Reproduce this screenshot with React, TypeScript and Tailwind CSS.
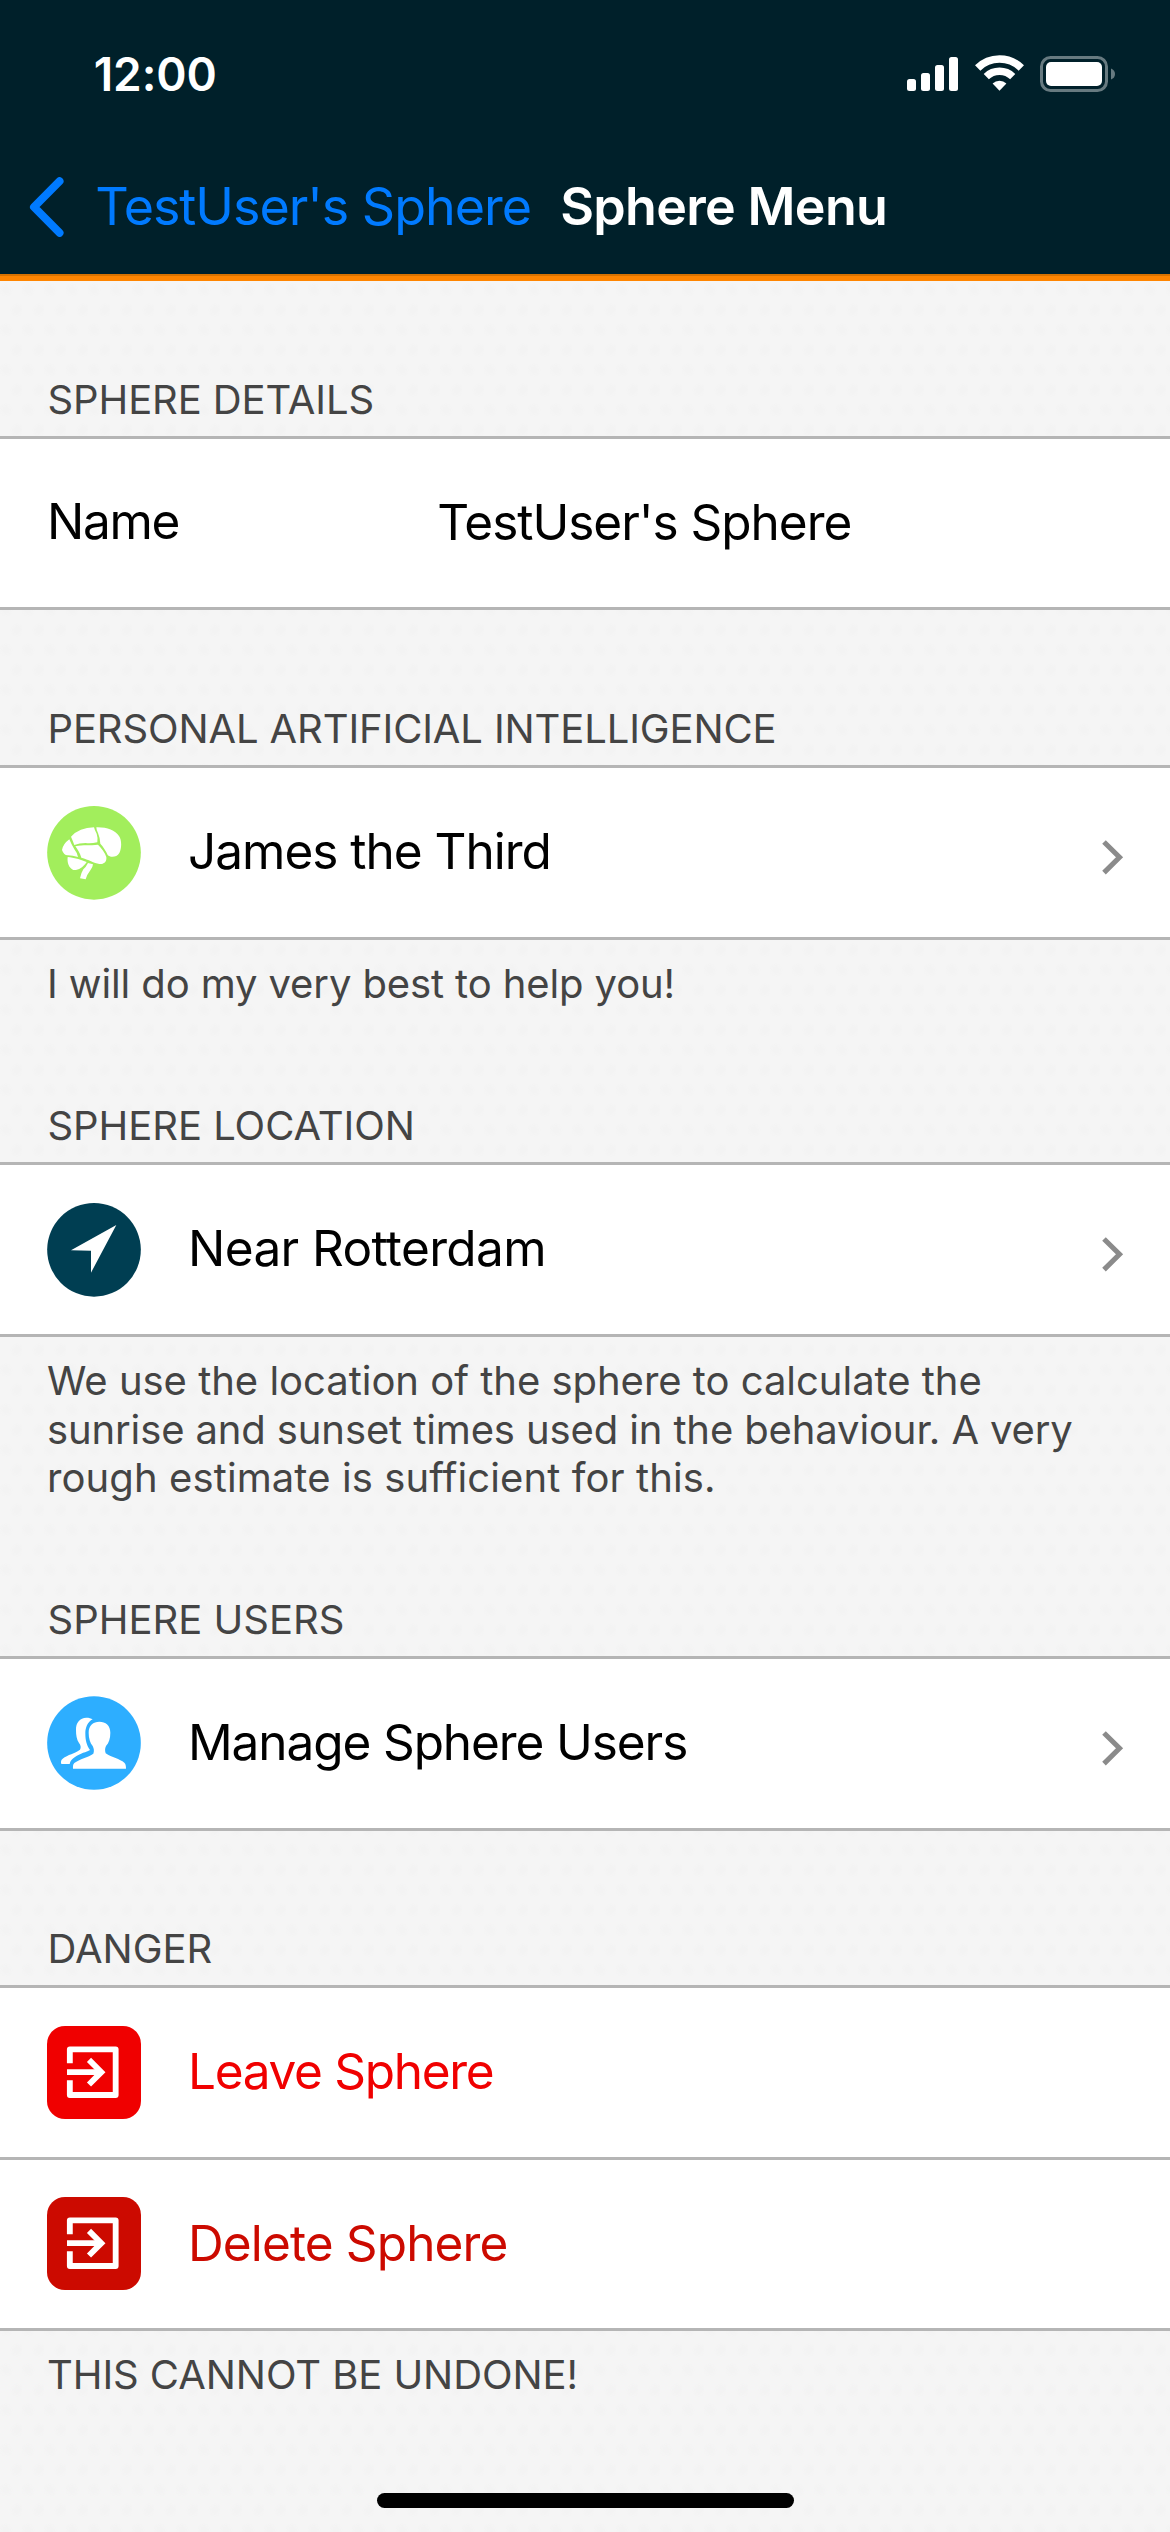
import type { ReactNode } from "react";

function StatusBar() {
  return (
    <div className="flex h-[148px] items-center pr-[55px] pl-[93.7px] text-white">
      <span className="text-[46px] leading-none font-semibold tracking-[-0.08px]">12:00</span>
      <svg className="ml-auto" width="51" height="34" viewBox="0 0 51 34" fill="currentColor">
        <rect x="0" y="22" width="9" height="12" rx="2.5" />
        <rect x="14" y="16" width="9" height="18" rx="2.5" />
        <rect x="28" y="8" width="9" height="26" rx="2.5" />
        <rect x="42" y="0" width="9" height="34" rx="2.5" />
      </svg>
      <svg className="mb-[2px] ml-[17px]" width="49" height="36" viewBox="0 0 49 36" fill="none">
        <path d="M2.7 13A31 31 0 0 1 46.3 13" stroke="currentColor" strokeWidth="7.6" />
        <path d="M11.3 21.6A19 19 0 0 1 37.7 21.6" stroke="currentColor" strokeWidth="7.4" />
        <path d="M17.6 28.6A10 10 0 0 1 31.4 28.6L24.5 35.8Z" fill="currentColor" />
      </svg>
      <svg className="ml-[16px]" width="75" height="36" viewBox="0 0 75 36">
        <rect x="1.5" y="1.5" width="65" height="33" rx="9" fill="none" stroke="#677a80" strokeWidth="3" />
        <rect x="6" y="6" width="56" height="24" rx="5" fill="currentColor" />
        <path d="M71 12.5Q75 14 75 18Q75 22 71 23.5Z" fill="#677a80" />
      </svg>
    </div>
  );
}

function NavBar() {
  return (
    <div className="flex h-[126px] items-center pb-[9px] pl-[27.5px] text-[52px] leading-[60px] whitespace-nowrap">
      <svg width="38" height="60" viewBox="0 0 38 60" fill="none">
        <path d="M31.5 4.2L6 30L31.5 55.8" stroke="#007aff" strokeWidth="8" strokeLinecap="round" strokeLinejoin="round" />
      </svg>
      <span className="ml-[29.7px] w-[465px] tracking-[-1.03px] text-[#007aff]">TestUser's Sphere</span>
      <h1 className="font-semibold tracking-[-0.69px] text-white">Sphere Menu</h1>
    </div>
  );
}

function BrainIcon() {
  return (
    <svg width="94" height="94" viewBox="81 77 282 282" fill="white">
      <circle cx="222" cy="217.5" r="140.5" fill="#a2ee5c" />
      <path d="M153 169Q178 142 222 141Q224 150 230 160Q234 172 232 186Q212 190 197 188Q178 188 163 194Q158 180 153 169Z" />
      <path d="M229 141C260 140 285 150 297 167C306 180 305 205 298 218C290 232 270 232 263 224C258 212 250 200 241 190Q240 172 234 158Q229 149 229 141Z" />
      <path d="M148 177Q129 191 126 209Q132 226 144 225Q158 226 174 230Q170 215 163 207Q154 192 148 177Z" />
      <path d="M166 198C190 192 210 196 234 193C244 203 255 216 259 230C261 246 250 252 238 251C222 248 206 238 184 232C180 218 172 206 166 198Z" />
      <path d="M143 230L150 231Q175 235 200 245C188 262 175 270 160 269C146 263 141 246 143 230Z" />
      <path d="M204 248L219 252Q218 262 212 268Q201 282 197 297L180 294Q183 278 190 267Q198 260 204 248Z" />
    </svg>
  );
}

function LocationIcon() {
  return (
    <svg width="94" height="94" viewBox="81 68 282 282">
      <circle cx="222" cy="208.5" r="140.5" fill="#003e52" />
      <path d="M289 134L213 277V211L153 210Z" fill="white" />
    </svg>
  );
}

function UsersIcon() {
  return (
    <svg className="-mt-px" width="94" height="94" viewBox="81 78 282 282" fill="white">
      <circle cx="222" cy="219" r="140.5" fill="#2daeff" />
      <path d="M238 155C257 155 271 166 271 188C271 205 267 218 258 228C254 236 255 243 257 250C275 262 300 267 313 278C318 283 318 290 318 296L159 296C159 290 158 284 163 279C178 267 205 262 220 251C223 243 222 236 218 228C210 218 206 205 206 188C206 166 220 155 238 155Z" />
      <path d="M168 180C167 158 180 143 199 143C207 143 213 145 218 148C203 156 196 172 196 190C196 212 200 226 210 240C200 246 180 250 165 261C156 267 151 272 149 282L124 282C122 275 123 270 128 266C143 254 165 250 180 239C184 232 182 225 177 219C170 208 168 196 168 180Z" />
    </svg>
  );
}

function ExitIcon({ className }: { className: string }) {
  return (
    <div className={`w-[94px] rounded-[18px] ${className}`}>
      <svg width="94" height="93" viewBox="81 77 282 279" fill="none" stroke="white" strokeWidth="17.5">
        <path d="M149.5 189V147H287V284H149.5V240" strokeLinejoin="round" />
        <path d="M141 215.5H240" />
        <path d="M207 178.5L244 215.5L207 252.5" />
      </svg>
    </div>
  );
}

function Header({ className, children }: { className: string; children: ReactNode }) {
  return (
    <h2 className={`flex items-end pb-[12px] pl-[47.5px] text-[40px] leading-[48px] text-[#444] ${className}`}>
      {children}
    </h2>
  );
}

function Footer({ className, children }: { className: string; children: ReactNode }) {
  return (
    <p className={`pt-[20px] pl-[47px] text-[40px] leading-[48.5px] whitespace-nowrap text-[#444] ${className}`}>
      {children}
    </p>
  );
}

function Divider() {
  return <div className="h-[3px] bg-[#b5b5b5]" />;
}

function Row({
  icon,
  label,
  className,
  height = "h-[172px]",
  chevron,
}: {
  icon: ReactNode;
  label: string;
  className: string;
  height?: string;
  chevron?: boolean;
}) {
  return (
    <div className={`flex items-start border-t-[3px] border-[#b5b5b5] bg-white pr-[46px] pl-[47px] ${height}`}>
      <div className="mt-[38px]">{icon}</div>
      <span className={`mt-[53px] ml-[47px] text-[49.5px] leading-[60px] whitespace-nowrap ${className}`}>{label}</span>
      {chevron && (
        <svg className="mt-[70px] ml-auto" width="24" height="40" viewBox="0 0 24 40" fill="none">
          <path d="M4 4L19.5 19.3L4 34.6" stroke="#8b8b8b" strokeWidth="5.1" />
        </svg>
      )}
    </div>
  );
}

export default function App() {
  return (
    <div className="flex h-[2532px] w-[1170px] flex-col overflow-hidden bg-[#f5f5f5] bg-[radial-gradient(circle_at_6px_10px,#f3f3f3_3px,transparent_7px),radial-gradient(circle_at_17px_30px,#f3f3f3_3px,transparent_7px)] bg-[size:22px_40px] font-['Inter',sans-serif]">
      <header className="h-[281px] shrink-0 border-b-[5px] border-[#ff8500] bg-[#00202a]">
        <StatusBar />
        <NavBar />
        <div className="h-[2px] bg-[#d87200]" />
      </header>

      <Header className="h-[155px] tracking-[-0.1px]">SPHERE DETAILS</Header>
      <div className="flex h-[174px] items-start border-y-[3px] border-[#b5b5b5] bg-white pl-[47px] text-[49.5px] leading-[60px] whitespace-nowrap text-black">
        <span className="mt-[52px] w-[390.3px] tracking-[-1.3px]">Name</span>
        <span className="mt-[53px] tracking-[-1.03px]">TestUser's Sphere</span>
      </div>

      <Header className="h-[155px] tracking-[-0.12px]">PERSONAL ARTIFICIAL INTELLIGENCE</Header>
      <Row icon={<BrainIcon />} label="James the Third" className="tracking-[-1.01px] text-black" chevron />
      <Divider />
      <Footer className="h-[68px] tracking-[-0.11px]">I will do my very best to help you!</Footer>

      <Header className="h-[154px] tracking-[-0.05px]">SPHERE LOCATION</Header>
      <Row icon={<LocationIcon />} label="Near Rotterdam" className="tracking-[-0.62px] text-black" chevron />
      <Divider />
      <Footer className="h-[165px]">
        <span className="tracking-[-0.02px]">We use the location of the sphere to calculate the</span>
        <br />
        <span className="tracking-[-0.12px]">sunrise and sunset times used in the behaviour. A very</span>
        <br />
        <span className="tracking-[0.1px]">rough estimate is sufficient for this.</span>
      </Footer>

      <Header className="h-[154px]">SPHERE USERS</Header>
      <Row icon={<UsersIcon />} label="Manage Sphere Users" className="tracking-[-1.1px] text-black" chevron />
      <Divider />

      <Header className="h-[154px]">DANGER</Header>
      <Row icon={<ExitIcon className="bg-[#f00000]" />} label="Leave Sphere" className="tracking-[-1.3px] text-[#f00000]" />
      <Row
        icon={<ExitIcon className="-mt-px bg-[#cc0a00]" />}
        label="Delete Sphere"
        className="tracking-[-0.87px] text-[#cc0a00]"
        height="h-[171px]"
      />
      <Divider />
      <Footer className="tracking-[-0.07px]">THIS CANNOT BE UNDONE!</Footer>

      <div className="mx-auto mt-auto mb-[24px] h-[15px] w-[417px] rounded-full bg-black" />
    </div>
  );
}
